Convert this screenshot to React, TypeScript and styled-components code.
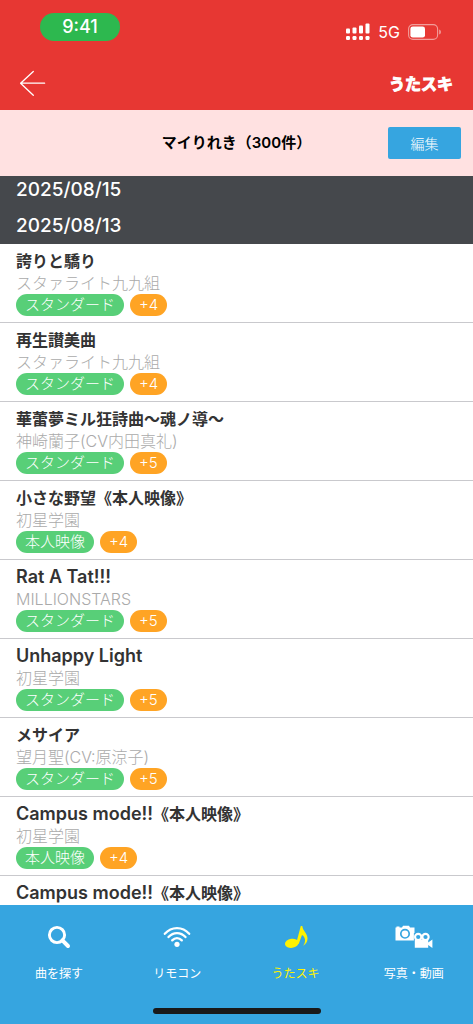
import React from "react";
import styled, { createGlobalStyle } from "styled-components";

const GlobalStyle = createGlobalStyle`
  *, *::before, *::after { box-sizing: border-box; }
  html, body, #root { height: 100%; }
  body {
    margin: 0;
    background: #fff;
    color: #333;
    font-family: Inter, "Noto Sans CJK JP", sans-serif;
  }
  h1, h2, h3, p, ul { margin: 0; padding: 0; }
  ul { list-style: none; }
`;

const Screen = styled.div`
  display: flex;
  flex-direction: column;
  height: 100vh;
  overflow: hidden;
`;

const Header = styled.header`
  flex: none;
  background: #e73733;
  color: #fff;
`;

const StatusBar = styled.div`
  display: flex;
  justify-content: space-between;
  height: 56px;
  padding: 13px 32px 0 40px;
`;

const Clock = styled.span`
  width: 80px;
  height: 28px;
  border-radius: 14px;
  background: #2db84f;
  font-size: 18px;
  font-weight: 500;
  line-height: 28px;
  text-align: center;
`;

const Signals = styled.div`
  display: flex;
  align-items: center;
  gap: 8px;
  height: 37px;
  font-size: 16px;
`;

const TitleBar = styled.div`
  display: flex;
  align-items: center;
  justify-content: space-between;
  height: 54px;
  padding: 0 20px 0 16px;
`;

const BackButton = styled.button`
  display: flex;
  padding: 0;
  border: 0;
  background: none;
  color: inherit;
`;

const Logo = styled.span`
  font-family: "Noto Sans CJK JP", sans-serif;
  font-size: 16px;
  font-weight: 700;
  line-height: 24px;
  -webkit-text-stroke: 1px #fff;
`;

const SubHeader = styled.div`
  flex: none;
  display: grid;
  grid-template-columns: 1fr auto 1fr;
  align-items: center;
  height: 66px;
  padding: 0 12px;
  background: #ffe1e1;
`;

const PageTitle = styled.h1`
  grid-column: 2;
  color: #000;
  font-size: 15px;
  font-weight: 600;
  line-height: 24px;
`;

const EditButton = styled.button`
  justify-self: end;
  width: 73px;
  height: 32px;
  padding: 0;
  border: 0;
  border-radius: 2px;
  background: #36a5e0;
  color: #fff;
  font-family: inherit;
  font-size: 14px;
  font-weight: 300;
`;

const History = styled.main`
  flex: 1;
  min-height: 0;
  overflow-y: auto;
  scrollbar-width: none;
`;

const DateHeading = styled.h2<{ $tucked?: boolean }>`
  padding: ${(p) => (p.$tucked ? "4px" : "8px")} 16px 8px;
  background: #45484c;
  color: #fff;
  font-size: 19px;
  font-weight: 500;
  line-height: 20px;
`;

const Song = styled.li`
  padding: 6px 16px;
  border-bottom: 1px solid #c9c9cd;
`;

const SongTitle = styled.h3`
  font-size: 16px;
  font-weight: 600;
  line-height: 22px;
`;

const Latin = styled.span`
  font-size: 18px;
`;

const Artist = styled.p`
  color: #aaa;
  font-size: 16px;
  font-weight: 300;
  line-height: 22px;
`;

const Tags = styled.div`
  display: flex;
  gap: 6px;
`;

const Tag = styled.span<{ $tone: "kind" | "key" }>`
  height: 22px;
  padding: 0 9px;
  border-radius: 11px;
  background: ${(p) => (p.$tone === "kind" ? "#58cf78" : "#ffa424")};
  color: #fff;
  font-size: 15px;
  font-weight: 300;
  line-height: 22px;
`;

const TabBar = styled.footer`
  flex: none;
  display: flex;
  flex-direction: column;
  align-items: center;
  height: 119px;
  padding-bottom: 10px;
  background: #36a5e0;
`;

const Tabs = styled.nav`
  flex: 1;
  display: flex;
  width: 100%;
`;

const Tab = styled.a<{ $active?: boolean }>`
  flex: 1;
  display: flex;
  flex-direction: column;
  align-items: center;
  gap: 14px;
  padding-top: 20px;
  color: ${(p) => (p.$active ? "#fff200" : "#fff")};
  font-family: "Noto Sans CJK JP", sans-serif;
  font-size: 12px;
  line-height: 20px;
  text-decoration: none;
`;

const HomeIndicator = styled.div`
  width: 168px;
  height: 6px;
  border-radius: 3px;
  background: #191919;
`;

const SignalIcon = () => (
  <svg width="24" height="18" viewBox="0 0 24 18" fill="#fff" aria-hidden="true">
    <rect x="0" y="5.5" width="4" height="5" rx="1" />
    <rect x="6.5" y="4.5" width="4" height="6" rx="1" />
    <rect x="13" y="2.5" width="4" height="8" rx="1" />
    <rect x="19.5" y="0.5" width="4" height="10" rx="1" />
    <rect x="0" y="13" width="4" height="4" rx="1.2" />
    <rect x="6.5" y="13" width="4" height="4" rx="1.2" />
    <rect x="13" y="13" width="4" height="4" rx="1.2" />
    <rect x="19.5" y="13" width="4" height="4" rx="1.2" />
  </svg>
);

const BatteryIcon = () => (
  <svg width="33" height="16" viewBox="0 0 33 16" aria-hidden="true">
    <rect x="0.6" y="0.6" width="29" height="14.8" rx="4.4" fill="none" stroke="#f29d9a" strokeWidth="1.1" />
    <rect x="2.4" y="2.4" width="14.6" height="11.2" rx="2.4" fill="#fff" />
    <path d="M31.2 5.4c1.3.6 1.7 1.5 1.7 2.600s-.4 2-1.7 2.600z" fill="#f29d9a" />
  </svg>
);

const BackIcon = () => (
  <svg width="32" height="28" viewBox="0 0 32 28" fill="none" stroke="#fff" strokeWidth="1.3" strokeLinecap="round" strokeLinejoin="round" aria-hidden="true">
    <path d="M17.3 2.5 4.6 14.2l12.7 12M4.6 14.2h24" />
  </svg>
);

const SearchIcon = () => (
  <svg width="24" height="24" viewBox="0 0 24 24" fill="none" stroke="#fff" aria-hidden="true">
    <circle cx="10" cy="10" r="7.600" strokeWidth="2.900" />
    <path d="m15.400 15.400 5.600 5.600" strokeWidth="4" strokeLinecap="round" />
  </svg>
);

const RemoteIcon = () => (
  <svg width="28" height="24" viewBox="0 0 28 24" fill="none" stroke="#fff" strokeWidth="2.300" strokeLinecap="round" aria-hidden="true">
    <path d="M1.800 8.800C8.600 1.100 19.400 1.100 26.200 8.800" />
    <path d="M5.500 12.100c4.800-5.400 12.200-5.400 17 0" />
    <path d="M9.200 15.400c2.800-3 6.800-3 9.600 0" />
    <circle cx="14" cy="19.300" r="2.600" fill="#fff" stroke="none" />
  </svg>
);

const NoteIcon = () => (
  <svg width="24" height="24" viewBox="0 0 24 24" fill="#fff200" aria-hidden="true">
    <ellipse cx="7.800" cy="18.300" rx="6.900" ry="4.600" transform="rotate(-8 7.800 18.300)" />
    <path d="M12.400 17.500 16.800 1h1.500c.2 4.500 5.200 7.500 5.200 12.500 0 3.400-2 5.900-4.400 7.300 1.500-2.100 2.200-4.300 1.900-6.400-.3-2-1.500-3.500-3-4.400l-3.300 9z" />
  </svg>
);

const CameraIcon = () => (
  <svg width="38" height="24" viewBox="0 0 38 24" aria-hidden="true">
    <path fill="#fff" d="M.5 2.500h1V1.500h3v1h2.500L8 .800h6l1 1.700H19.500V15.500H.5z" />
    <circle cx="10" cy="8.800" r="4.200" fill="none" stroke="#36a5e0" strokeWidth="1.700" />
    <path fill="none" stroke="#36a5e0" strokeWidth="1" d="M19.400 16V8" />
    <circle cx="23.200" cy="12" r="4.200" fill="#fff" />
    <circle cx="30.500" cy="12" r="4.200" fill="#fff" />
    <path fill="#fff" d="M19.800 14.500h13.400v3l4.200-3v8.600l-4.200-3v2.600H19.800z" />
    <circle cx="23.200" cy="12" r="2.100" fill="#36a5e0" />
    <circle cx="30.500" cy="12" r="2.100" fill="#36a5e0" />
  </svg>
);

type Entry = {
  latin?: string;
  title?: string;
  artist?: string;
  kind?: string;
  shift?: string;
};

const standard = "スタンダード";
const live = "本人映像";

const songs: Entry[] = [
  { title: "誇りと驕り", artist: "スタァライト九九組", kind: standard, shift: "+4" },
  { title: "再生讃美曲", artist: "スタァライト九九組", kind: standard, shift: "+4" },
  { title: "華蕾夢ミル狂詩曲〜魂ノ導〜", artist: "神崎蘭子(CV内田真礼)", kind: standard, shift: "+5" },
  { title: "小さな野望《本人映像》", artist: "初星学園", kind: live, shift: "+4" },
  { latin: "Rat A Tat!!!", artist: "MILLIONSTARS", kind: standard, shift: "+5" },
  { latin: "Unhappy Light", artist: "初星学園", kind: standard, shift: "+5" },
  { title: "メサイア", artist: "望月聖(CV:原涼子)", kind: standard, shift: "+5" },
  { latin: "Campus mode!!", title: "《本人映像》", artist: "初星学園", kind: live, shift: "+4" },
  { latin: "Campus mode!!", title: "《本人映像》" },
];

export default function App() {
  return (
    <Screen lang="ja">
      <GlobalStyle />
      <Header>
        <StatusBar>
          <Clock>9:41</Clock>
          <Signals>
            <SignalIcon />
            <span>5G</span>
            <BatteryIcon />
          </Signals>
        </StatusBar>
        <TitleBar>
          <BackButton aria-label="戻る">
            <BackIcon />
          </BackButton>
          <Logo>うたスキ</Logo>
        </TitleBar>
      </Header>
      <SubHeader>
        <PageTitle>マイりれき（300件）</PageTitle>
        <EditButton>編集</EditButton>
      </SubHeader>
      <History>
        <DateHeading $tucked>2025/08/15</DateHeading>
        <DateHeading>2025/08/13</DateHeading>
        <ul>
          {songs.map((song, i) => (
            <Song key={i}>
              <SongTitle>
                {song.latin && <Latin>{song.latin}</Latin>}
                {song.title}
              </SongTitle>
              {song.artist && <Artist>{song.artist}</Artist>}
              {song.kind && (
                <Tags>
                  <Tag $tone="kind">{song.kind}</Tag>
                  <Tag $tone="key">{song.shift}</Tag>
                </Tags>
              )}
            </Song>
          ))}
        </ul>
      </History>
      <TabBar>
        <Tabs>
          <Tab href="#search"><SearchIcon />曲を探す</Tab>
          <Tab href="#remote"><RemoteIcon />リモコン</Tab>
          <Tab href="#utasuki" $active aria-current="page"><NoteIcon />うたスキ</Tab>
          <Tab href="#media"><CameraIcon />写真・動画</Tab>
        </Tabs>
        <HomeIndicator />
      </TabBar>
    </Screen>
  );
}
